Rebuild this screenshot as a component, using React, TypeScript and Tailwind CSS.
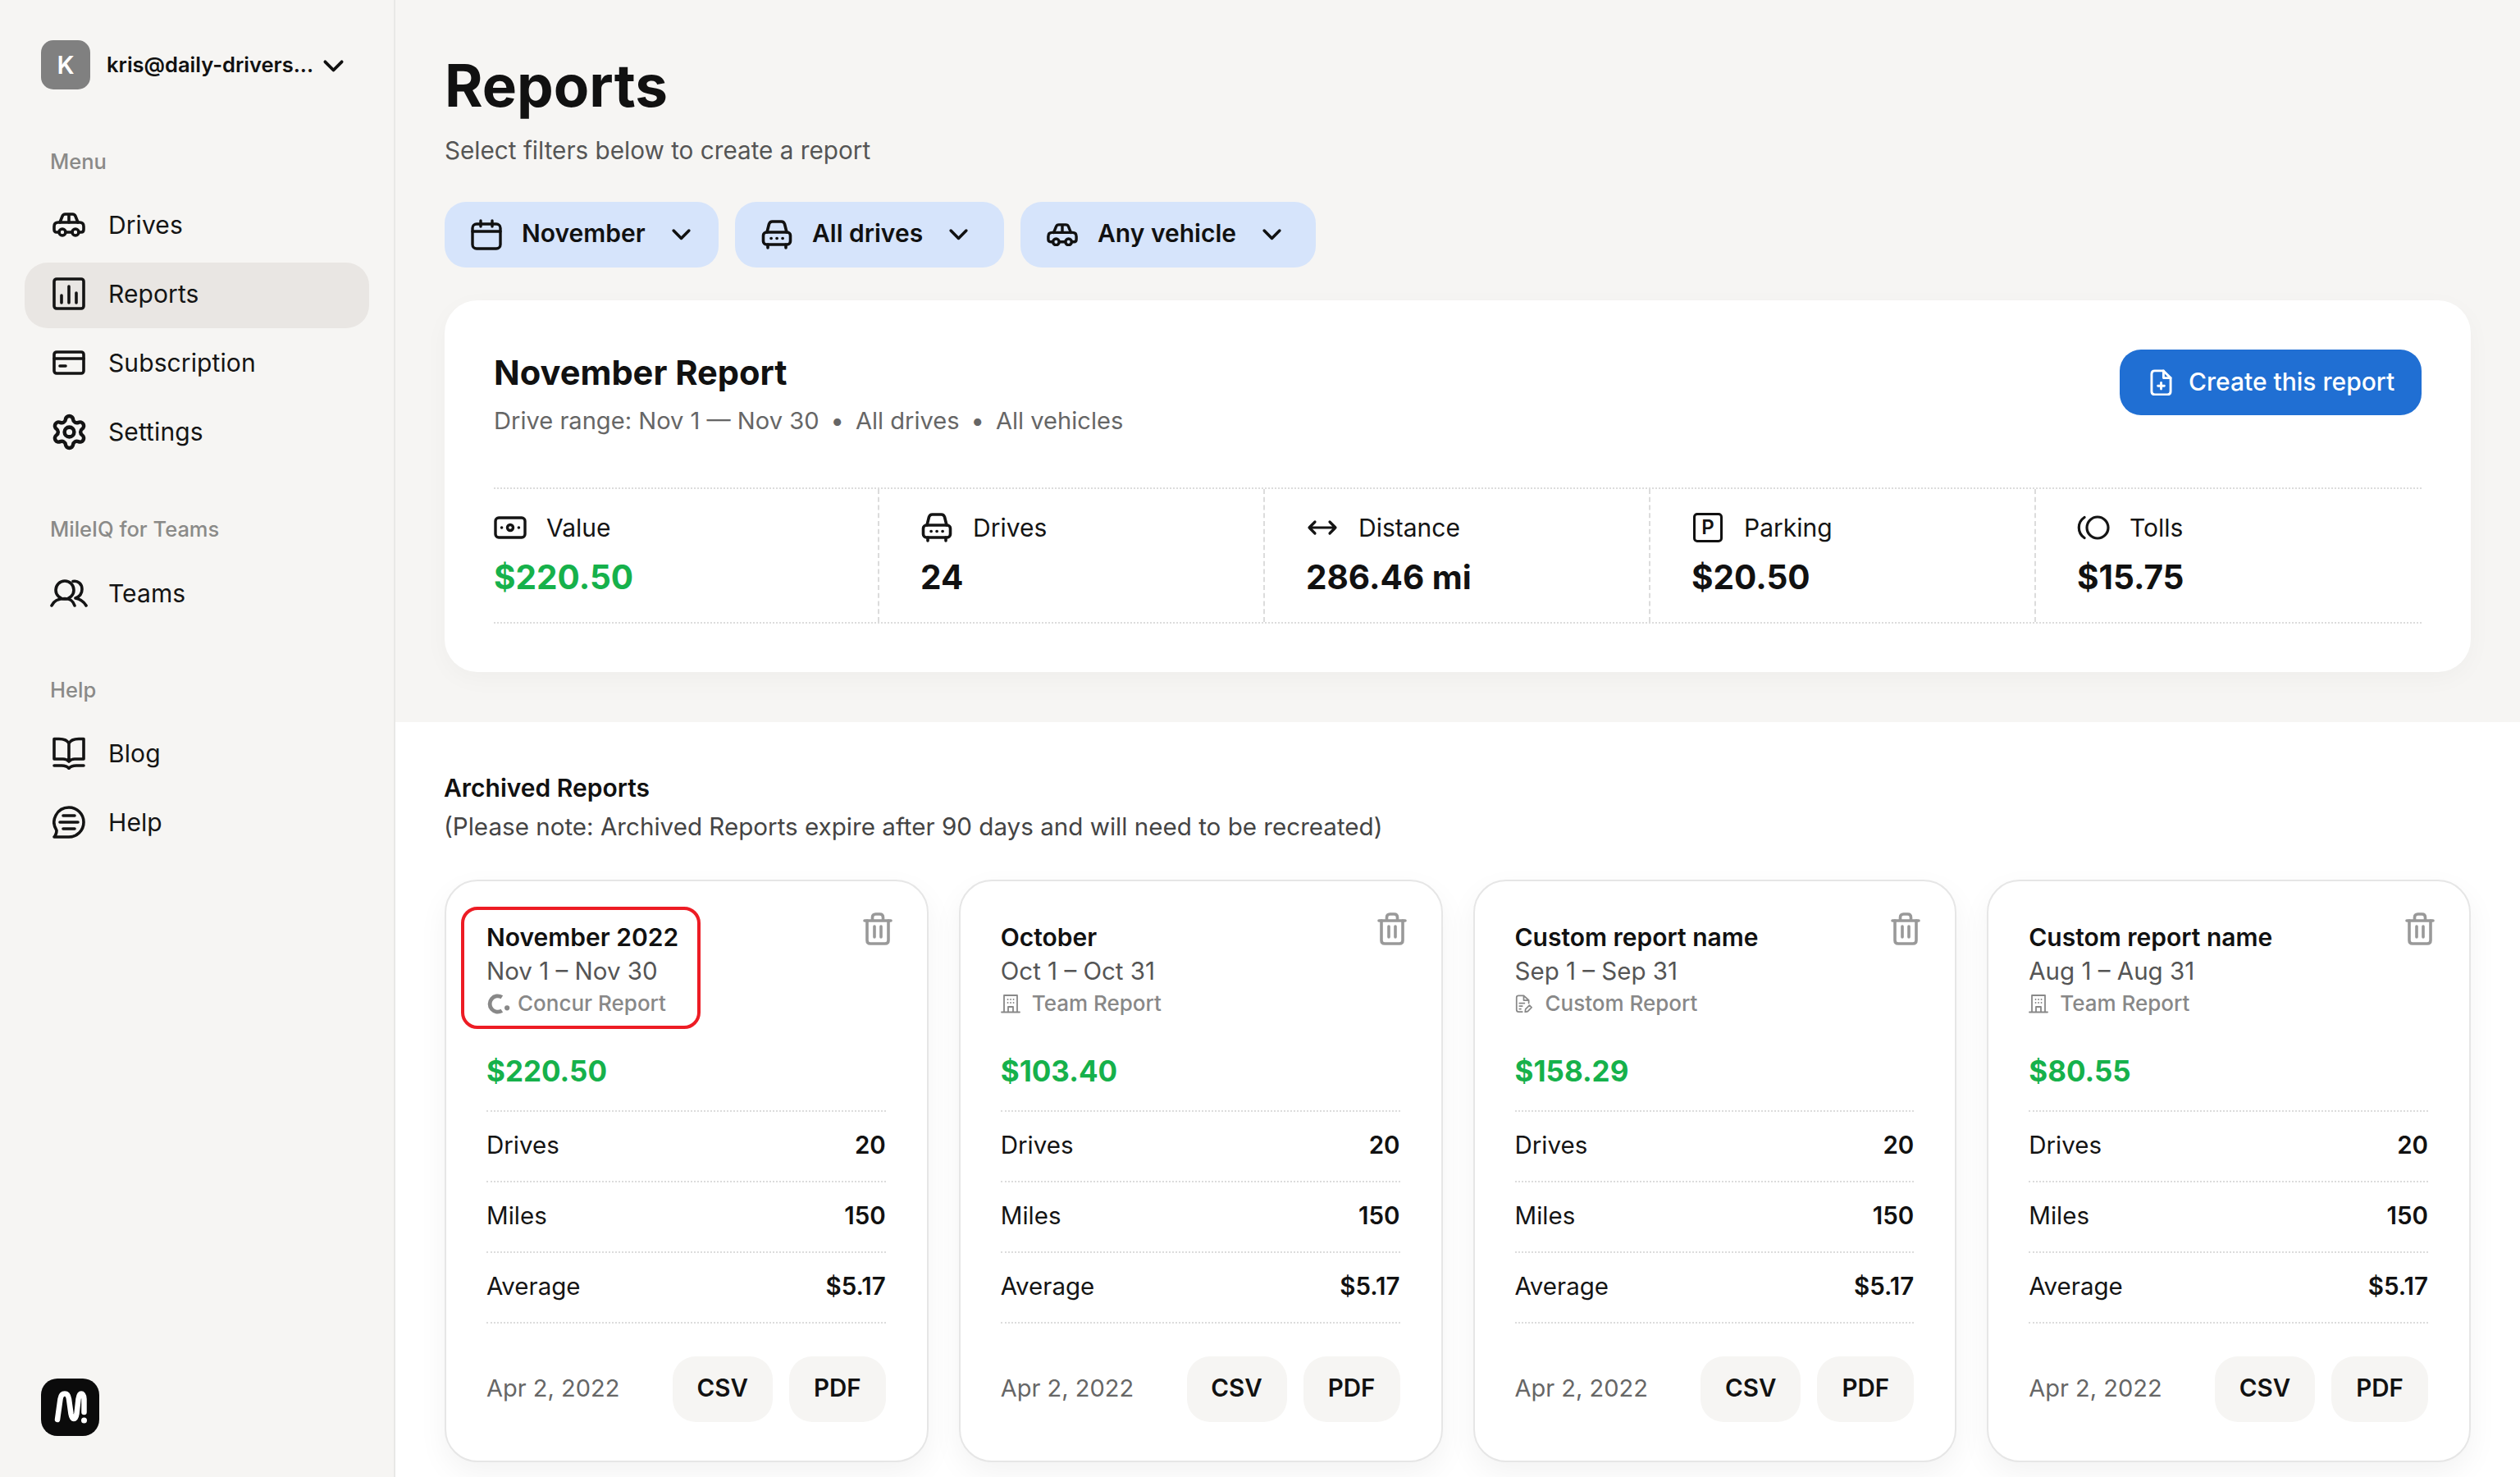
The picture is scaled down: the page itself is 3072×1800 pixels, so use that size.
import React from 'react';
import { Settings } from 'lucide-react';

type IconProps = { className?: string };

const stroke = {
  fill: 'none',
  stroke: 'currentColor',
  strokeLinecap: 'round' as const,
  strokeLinejoin: 'round' as const,
};

function CarSide({ className }: IconProps) {
  return (
    <svg viewBox="0 0 40 30" className={className} {...stroke} strokeWidth={3.6}>
      <path d="M9 12 12 4.500Q13 2 15.500 2H24.500Q27 2 28 4.500L31 12M20 2V12" />
      <path d="M8 24H5Q2 24 2 20.500V17Q2 12 7 12H33Q38 12 38 17V20.500Q38 24 35 24H32M16 24H24" />
      <circle cx="12" cy="24" r="4" />
      <circle cx="28" cy="24" r="4" />
    </svg>
  );
}

function CarFront({ className }: IconProps) {
  return (
    <svg viewBox="0 0 38 36" className={className} {...stroke} strokeWidth={3.6}>
      <path d="M7 15 9.500 5Q10.500 2 13.500 2H24.500Q27.500 2 28.500 5L31 15" />
      <rect x="2.500" y="15" width="33" height="15" rx="4" />
      <path d="M8 30V34M30 30V34" />
      <path d="M12 22.500H12.200M19 22.500H19.200M26 22.500H26.200" />
    </svg>
  );
}

function ReportsIcon({ className }: IconProps) {
  return (
    <svg viewBox="0 0 40 40" className={className} {...stroke} strokeWidth={3.6}>
      <rect x="2" y="2" width="36" height="36" rx="3" />
      <path d="M11 22V31M20 11V31M29 19V31" />
    </svg>
  );
}

function CardIcon({ className }: IconProps) {
  return (
    <svg viewBox="0 0 40 30" className={className} {...stroke} strokeWidth={3.6}>
      <rect x="2" y="2" width="36" height="26" rx="3" />
      <path d="M2 10H38M9 19H16" />
    </svg>
  );
}

function TeamsIcon({ className }: IconProps) {
  return (
    <svg viewBox="0 0 46 34" className={className} {...stroke} strokeWidth={3.6}>
      <circle cx="18" cy="13" r="11" />
      <path d="M2 32C5 25 11 23.500 18 23.500 25 23.500 28 26 30 32" />
      <path d="M28 2.500C34 1 39 6 39 12 39 17 36 21 31 23 37 24 41 27 44 32" />
    </svg>
  );
}

function BookIcon({ className }: IconProps) {
  return (
    <svg viewBox="0 0 40 40" className={className} {...stroke} strokeWidth={3.6}>
      <path d="M2 2.500H8C14 2.500 18 4 20 8 22 4 26 2.500 32 2.500H38V27H27C24 27 22 28 20 30 18 28 16 27 13 27H2ZM20 8V29" />
      <path d="M2 35H11C15 35 18 36 20 38.500 22 36 25 35 29 35H38" />
    </svg>
  );
}

function HelpIcon({ className }: IconProps) {
  return (
    <svg viewBox="0 0 40 40" className={className} {...stroke} strokeWidth={3.6}>
      <path d="M20 2A18 18 0 0 1 20 38H2C4 36 5 34 5 30A18 18 0 0 1 20 2Z" />
      <path d="M13 12H27M9 20H31M13 28H27" />
    </svg>
  );
}

function Chevron({ className }: IconProps) {
  return (
    <svg viewBox="0 0 24 16" className={className} {...stroke} strokeWidth={3.4}>
      <path d="M3 3 12 12 21 3" />
    </svg>
  );
}

function CalendarIcon({ className }: IconProps) {
  return (
    <svg viewBox="0 0 38 38" className={className} {...stroke} strokeWidth={3.4}>
      <rect x="2" y="6" width="34" height="30" rx="5" />
      <path d="M2 15H36M12 2V9M26 2V9" />
    </svg>
  );
}

function BillIcon({ className }: IconProps) {
  return (
    <svg viewBox="0 0 40 28" className={className} {...stroke} strokeWidth={3.4}>
      <rect x="2" y="2" width="36" height="24" rx="4" />
      <circle cx="20" cy="14" r="3.500" />
      <path d="M9.500 14H9.700M30.300 14H30.500" />
    </svg>
  );
}

function ArrowsIcon({ className }: IconProps) {
  return (
    <svg viewBox="0 0 38 20" className={className} {...stroke} strokeWidth={3.2}>
      <path d="M3 10H35M10 3 3 10 10 17M28 3 35 10 28 17" />
    </svg>
  );
}

function TollsIcon({ className }: IconProps) {
  return (
    <svg viewBox="0 0 40 30" className={className} {...stroke} strokeWidth={3.2}>
      <circle cx="25" cy="15" r="13" />
      <path d="M9 2.500A15 15 0 0 0 9 27.500" />
    </svg>
  );
}

function DocPlus({ className }: IconProps) {
  return (
    <svg viewBox="0 0 28 34" className={className} {...stroke} strokeWidth={3}>
      <path d="M6 2H17L26 11V28Q26 32 22 32H6Q2 32 2 28V6Q2 2 6 2Z" />
      <path d="M17 2V11H26M14 17V25M10 21H18" />
    </svg>
  );
}

function ConcurIcon({ className }: IconProps) {
  return (
    <svg viewBox="0 0 30 30" className={className}>
      <path d="M19.500 6.500A10 10 0 1 0 19.500 23.500" fill="none" stroke="currentColor" strokeWidth={5} />
      <circle cx="26" cy="20" r="3.200" fill="currentColor" />
    </svg>
  );
}

function BuildingIcon({ className }: IconProps) {
  return (
    <svg viewBox="0 0 24 24" className={className} {...stroke} strokeWidth={1.800}>
      <path d="M4 22V2H20V22M1 22.500H23M9 22V16H15V22" />
      <path d="M8.500 7H8.600M12 7H12.100M15.500 7H15.600M8.500 11H8.600M12 11H12.100M15.500 11H15.600" />
    </svg>
  );
}

function DocEditIcon({ className }: IconProps) {
  return (
    <svg viewBox="0 0 24 26" className={className} {...stroke} strokeWidth={2}>
      <path d="M10 24H5Q2 24 2 21V4Q2 1.500 5 1.500H12L19 8V12M12 1.500V8H19" />
      <path d="M6 12H13M6 16H10M6 20H8" />
      <path d="M14 24.500 14.500 20.500 20 15 23 18 17.500 23.500Z" />
    </svg>
  );
}

function TrashIcon({ className }: IconProps) {
  return (
    <svg viewBox="0 0 36 40" className={className} {...stroke} strokeWidth={3.6}>
      <path d="M2 10H34M11.500 10V6Q11.500 2 15.500 2H20.500Q24.500 2 24.500 6V10" />
      <path d="M5 10V34Q5 38 9 38H27Q31 38 31 34V10M14 17V30M22 17V30" />
    </svg>
  );
}

function NavItem({ icon, label, active }: { icon: React.ReactNode; label: string; active?: boolean }) {
  return (
    <div
      className={`flex w-[420px] items-center gap-[28px] rounded-[28px] pl-[34px] text-[30px] tracking-[0.1px] text-[#141414] ${
        active ? 'mt-[2px] -mb-[2px] h-[80px] bg-[#e9e6e3] pb-[4px]' : 'h-[80px]'
      }`}
    >
      <span className="flex w-[40px] shrink-0 items-center justify-center">{icon}</span>
      {label}
    </div>
  );
}

function SectionLabel({ children, className }: { children: string; className?: string }) {
  return <div className={`h-[30px] pl-[31px] text-[25.500px] leading-[30px] font-medium text-[#8a8a88] ${className}`}>{children}</div>;
}

function Sidebar() {
  return (
    <aside className="flex h-[1800px] w-[482px] shrink-0 flex-col border-r-2 border-[#e8e8e6] bg-[#f6f5f3] px-[30px] pt-[49px] pb-[50px]">
      <div className="flex h-[60px] items-center pl-[20px]">
        <div className="flex h-[60px] w-[60px] items-center justify-center rounded-[15px] bg-[#808080] text-[30px] font-semibold text-white">K</div>
        <span className="ml-[20px] text-[25.500px] font-semibold text-[#111]">kris@daily-drivers...</span>
        <Chevron className="mt-[4px] ml-[11px] w-[27px] text-[#111]" />
      </div>
      <SectionLabel className="mt-[73px]">Menu</SectionLabel>
      <nav className="mt-[22px] flex flex-col gap-[4px]">
        <NavItem icon={<CarSide className="w-[40px]" />} label="Drives" />
        <NavItem active icon={<ReportsIcon className="w-[40px]" />} label="Reports" />
        <NavItem icon={<CardIcon className="w-[40px]" />} label="Subscription" />
        <NavItem icon={<Settings size={47} strokeWidth={2.300} className="shrink-0" />} label="Settings" />
      </nav>
      <SectionLabel className="mt-[64px]">MileIQ for Teams</SectionLabel>
      <div className="mt-[23px]">
        <NavItem icon={<TeamsIcon className="w-[46px] shrink-0" />} label="Teams" />
      </div>
      <SectionLabel className="mt-[63px]">Help</SectionLabel>
      <div className="mt-[22px] flex flex-col gap-[4px]">
        <NavItem icon={<BookIcon className="w-[40px]" />} label="Blog" />
        <NavItem icon={<HelpIcon className="w-[40px]" />} label="Help" />
      </div>
      <div className="mt-auto ml-[20px] flex h-[70px] w-[71px] items-center justify-center rounded-[20px] bg-[#0b0b0b]">
        <svg viewBox="0 0 70 70" className="h-[70px] w-[70px]" fill="none" stroke="#fff" strokeWidth={6.500} strokeLinecap="round" strokeLinejoin="round">
          <path d="M19 50 22.500 25Q23.500 18.500 28 18.500 32 18.500 33 25L35.500 43Q36.500 49 39 49 41.500 49 42.500 43L44.500 25Q45.500 18.500 48 18.500 51 18.500 51.500 25V41" />
          <circle cx="51.500" cy="51" r="3.500" fill="#fff" stroke="none" />
        </svg>
      </div>
    </aside>
  );
}

function FilterButton({ icon, label, width }: { icon: React.ReactNode; label: string; width: string }) {
  return (
    <div className={`flex h-[80px] items-center rounded-[26px] bg-[#d6e4fb] pl-[32px] text-[30px] font-semibold text-[#111] ${width}`}>
      <span className="flex w-[38px] shrink-0 justify-center">{icon}</span>
      <span className="ml-[24px] pb-[3px]">{label}</span>
      <Chevron className="ml-[31px] w-[25px] shrink-0" />
    </div>
  );
}

const stats = [
  { icon: <BillIcon className="w-[40px]" />, label: 'Value', value: '$220.50', green: true },
  { icon: <CarFront className="w-[38px]" />, label: 'Drives', value: '24' },
  { icon: <ArrowsIcon className="w-[38px]" />, label: 'Distance', value: '286.46 mi' },
  {
    icon: (
      <span className="flex h-[36px] w-[36px] items-center justify-center rounded-[5px] border-[3px] border-[#111] text-[24px] leading-none font-semibold">P</span>
    ),
    label: 'Parking',
    value: '$20.50',
  },
  { icon: <TollsIcon className="w-[40px]" />, label: 'Tolls', value: '$15.75' },
];

function ReportPanel() {
  return (
    <section className="mt-[40px] h-[453px] rounded-[40px] bg-white px-[60px] pt-[60px] shadow-[0_8px_30px_rgba(0,0,0,0.03)]">
      <div className="flex items-start justify-between">
        <div>
          <h2 className="h-[56px] text-[41.600px] leading-[56px] font-bold text-[#111]">November Report</h2>
          <p className="mt-[11px] flex h-[40px] items-center text-[29.100px] leading-[40px] text-[#666]">
            Drive range: Nov 1 — Nov 30
            <span className="mx-[14px]">•</span>
            All drives
            <span className="mx-[14px]">•</span>
            All vehicles
          </p>
        </div>
        <button className="flex h-[80px] w-[368px] items-center gap-[20px] rounded-[26px] bg-[#206fd3] pb-[2px] pl-[37px] text-[30px] font-medium text-white">
          <DocPlus className="mt-[2px] w-[27px]" />
          Create this report
        </button>
      </div>
      <div className="mt-[61px] grid h-[166px] grid-cols-5 border-y-2 border-dotted border-[#dcdcdc]">
        {stats.map((s, i) => (
          <div key={s.label} className={`pt-[27px] ${i > 0 ? 'pl-[50px]' : ''} ${i < 4 ? 'border-r-2 border-dashed border-[#dcdcdc]' : ''}`}>
            <div className="flex h-[40px] items-center gap-[24px] text-[30px] text-[#141414]">
              <span className="flex w-[40px] shrink-0 justify-center">{s.icon}</span>
              {s.label}
            </div>
            <div className={`mt-[16px] text-[40.500px] leading-[50px] font-bold ${s.green ? 'text-[#16b14b]' : 'text-[#111]'}`}>{s.value}</div>
          </div>
        ))}
      </div>
    </section>
  );
}

type Archived = {
  title: string;
  range: string;
  kind: string;
  kindIcon: React.ReactNode;
  amount: string;
  highlight?: boolean;
};

const archived: Archived[] = [
  { title: 'November 2022', range: 'Nov 1 – Nov 30', kind: 'Concur Report', kindIcon: <ConcurIcon className="-mr-[3px] w-[29px]" />, amount: '$220.50', highlight: true },
  { title: 'October', range: 'Oct 1 – Oct 31', kind: 'Team Report', kindIcon: <BuildingIcon className="mr-[2px] w-[24px]" />, amount: '$103.40' },
  { title: 'Custom report name', range: 'Sep 1 – Sep 31', kind: 'Custom Report', kindIcon: <DocEditIcon className="mr-[4px] w-[21px]" />, amount: '$158.29' },
  { title: 'Custom report name', range: 'Aug 1 – Aug 31', kind: 'Team Report', kindIcon: <BuildingIcon className="mr-[2px] w-[24px]" />, amount: '$80.55' },
];

function Row({ label, value }: { label: string; value: string }) {
  return (
    <div className="flex h-[86px] items-center justify-between border-b-2 border-dotted border-[#dcdcdc] pb-[4px] text-[29.500px]">
      <span className="text-[#141414]">{label}</span>
      <span className="font-semibold text-[#111]">{value}</span>
    </div>
  );
}

function ArchivedCard({ report }: { report: Archived }) {
  return (
    <div className="relative h-[710px] rounded-[40px] border-2 border-[#e6e6e6] bg-white pt-[48px] pr-[50px] pl-[49px] shadow-[0_14px_36px_rgba(0,0,0,0.05)]">
      {report.highlight && <div className="absolute top-[31px] left-[18px] h-[149px] w-[292px] rounded-[20px] border-4 border-[#ed1c24]" />}
      <div className="flex items-start justify-between">
        <div>
          <div className="h-[40px] text-[30px] leading-[40px] font-semibold text-[#111]">{report.title}</div>
          <div className="mt-[1px] h-[40px] text-[29.500px] leading-[40px] text-[#555]">{report.range}</div>
          <div className="mt-[2px] flex h-[36px] items-center gap-[12px] text-[26px] leading-[36px] font-medium text-[#888]">
            {report.kindIcon}
            {report.kind}
          </div>
        </div>
        <TrashIcon className="-mt-[10px] -mr-[8px] w-[36px] text-[#999]" />
      </div>
      <div className="mt-[39px] h-[50px] text-[35px] leading-[50px] font-bold text-[#16b14b]">{report.amount}</div>
      <div className="mt-[23px] border-t-2 border-dotted border-[#dcdcdc]">
        <Row label="Drives" value="20" />
        <Row label="Miles" value="150" />
        <Row label="Average" value="$5.17" />
      </div>
      <div className="mt-[40px] flex items-center">
        <span className="pb-[3px] text-[29px] text-[#666]">Apr 2, 2022</span>
        <button className="ml-auto h-[80px] w-[122px] rounded-[28px] bg-[#f6f5f3] pb-[3px] text-[29.500px] font-semibold text-[#111]">CSV</button>
        <button className="ml-[20px] h-[80px] w-[118px] rounded-[28px] bg-[#f6f5f3] pb-[3px] text-[29.500px] font-semibold text-[#111]">PDF</button>
      </div>
    </div>
  );
}

export default function App() {
  return (
    <div className="flex h-[1800px] w-[3072px] overflow-hidden bg-white font-['Inter',sans-serif]">
      <Sidebar />
      <main className="flex min-w-0 flex-1 flex-col">
        <div className="h-[880px] bg-[#f6f5f3] px-[60px] pt-[64px]">
          <h1 className="h-[80px] text-[71px] leading-[80px] font-bold text-[#111]">Reports</h1>
          <p className="mt-[19px] h-[40px] text-[29.700px] leading-[40px] text-[#555]">Select filters below to create a report</p>
          <div className="mt-[43px] flex gap-[20px]">
            <FilterButton icon={<CalendarIcon className="w-[38px]" />} label="November" width="w-[334px]" />
            <FilterButton icon={<CarFront className="w-[38px]" />} label="All drives" width="w-[328px]" />
            <FilterButton icon={<CarSide className="w-[38px]" />} label="Any vehicle" width="w-[360px]" />
          </div>
          <ReportPanel />
        </div>
        <div className="flex-1 px-[60px] pt-[60px]">
          <h3 className="-ml-[1px] h-[40px] text-[30px] leading-[40px] font-semibold text-[#111]">Archived Reports</h3>
          <p className="mt-[7px] -ml-[1px] h-[40px] text-[29.600px] leading-[40px] text-[#444]">(Please note: Archived Reports expire after 90 days and will need to be recreated)</p>
          <div className="mt-[45px] grid grid-cols-4 gap-[37px]">
            {archived.map((r) => (
              <ArchivedCard key={r.range} report={r} />
            ))}
          </div>
        </div>
      </main>
    </div>
  );
}
